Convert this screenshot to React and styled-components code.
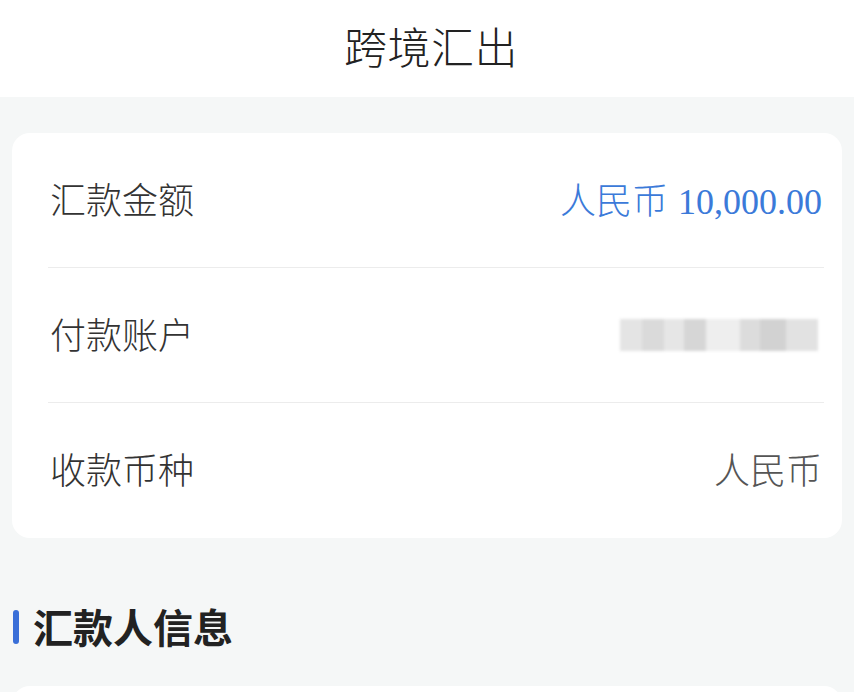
import React from 'react';
import styled, { createGlobalStyle } from 'styled-components';

const GlobalStyle = createGlobalStyle`
  html, body {
    margin: 0;
    padding: 0;
    background: #f5f7f7;
    font-family: "Noto Sans CJK SC", "Noto Sans", sans-serif;
  }
`;

const Page = styled.div`
  width: 854px;
  min-height: 692px;
  overflow: hidden;
  background: #f5f7f7;
`;

const Header = styled.header`
  height: 97px;
  background: #ffffff;
  display: flex;
  align-items: center;
  justify-content: center;
`;

const Title = styled.h1`
  margin: 0 0 8px 8px;
  font-size: 43px;
  font-weight: 300;
  color: #222;
  letter-spacing: 0.5px;
`;

const Card = styled.section`
  margin: ${(p) => p.margin || '0 12px'};
  background: #ffffff;
  border-radius: 18px;
  min-height: ${(p) => p.minHeight || 'auto'};
`;

const Row = styled.div`
  height: 135px;
  margin: 0 18px 0 36px;
  display: flex;
  align-items: center;
  justify-content: space-between;
  border-bottom: 1px solid #ececec;
  box-sizing: border-box;

  &:last-child {
    border-bottom: none;
  }
`;

const Label = styled.span`
  font-size: 36px;
  font-weight: 300;
  color: #333;
  margin: 0 0 5px 2px;
`;

const Value = styled.span`
  font-size: 36px;
  font-weight: 300;
  color: ${(p) => p.color || '#555'};
  display: flex;
  align-items: baseline;
  gap: 10px;
  margin: 0 2px 5px 0;
`;

const Amount = styled.span`
  font-family: "Liberation Serif", "Times New Roman", serif;
  font-weight: 400;
  font-size: 36px;
`;

const Mosaic = styled.div`
  display: flex;
  height: 32px;
  margin-right: 6px;
  filter: blur(1.5px);
`;

const Tile = styled.div`
  width: ${(p) => p.w}px;
  background: ${(p) => p.shade};
`;

const SectionHead = styled.div`
  display: flex;
  align-items: center;
  gap: 14px;
  padding: 68px 0 38px 13px;
`;

const Bar = styled.div`
  width: 6px;
  height: 34px;
  border-radius: 3px;
  background: #3a6fd8;
`;

const SectionTitle = styled.h2`
  margin: 0 0 2px;
  font-size: 40px;
  line-height: 40px;
  font-weight: 700;
  color: #222;
`;

const tiles = [
  ['#e4e4e4', 22], ['#dadada', 22], ['#e6e6e6', 20], ['#d6d6d6', 22],
  ['#eeeeee', 34], ['#dcdcdc', 20], ['#d2d2d2', 26], ['#e2e2e2', 32],
];

export default function App() {
  return (
    <Page>
      <GlobalStyle />
      <Header>
        <Title>跨境汇出</Title>
      </Header>

      <Card margin="36px 12px 0">
        <Row>
          <Label>汇款金额</Label>
          <Value color="#3b7ad9">
            人民币
            <Amount>10,000.00</Amount>
          </Value>
        </Row>
        <Row>
          <Label>付款账户</Label>
          <Mosaic>
            {tiles.map(([shade, w], i) => <Tile key={i} shade={shade} w={w} />)}
          </Mosaic>
        </Row>
        <Row>
          <Label>收款币种</Label>
          <Value>人民币</Value>
        </Row>
      </Card>

      <SectionHead>
        <Bar />
        <SectionTitle>汇款人信息</SectionTitle>
      </SectionHead>

      <Card minHeight="120px" />
    </Page>
  );
}
